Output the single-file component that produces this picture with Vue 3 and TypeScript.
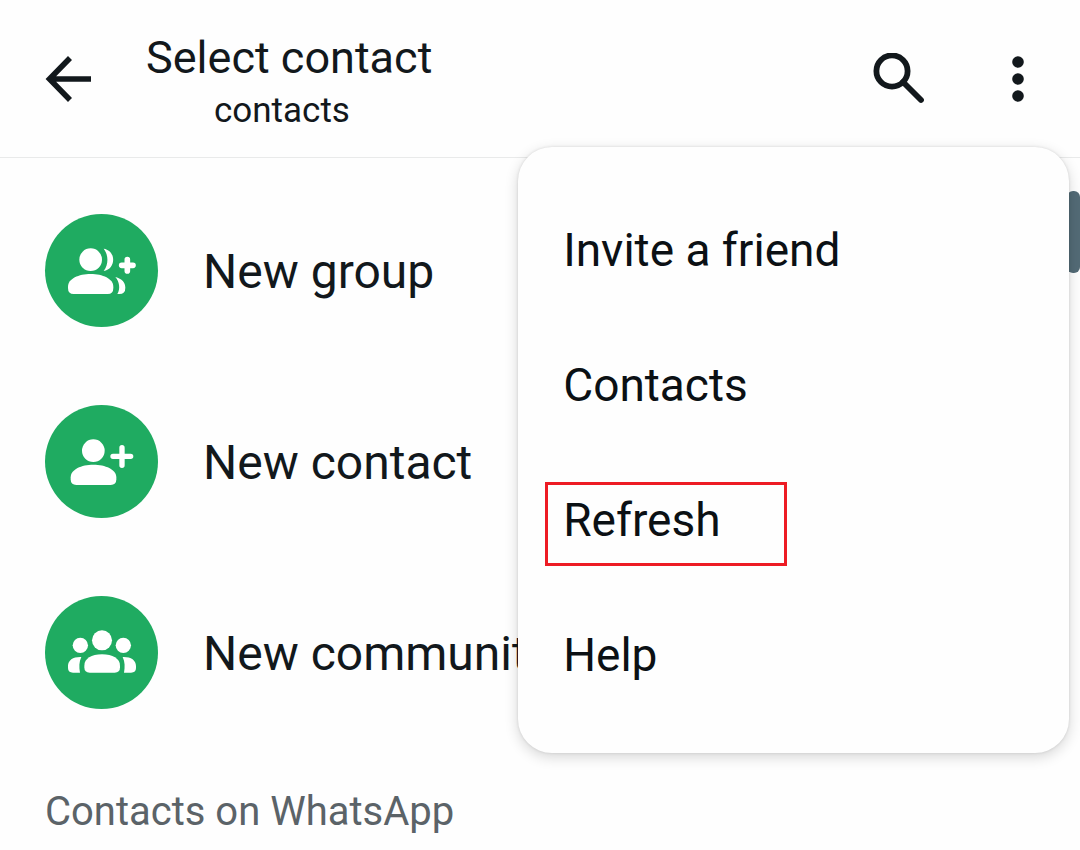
<script setup lang="ts">
import { ref } from 'vue'

type IconName = 'group' | 'contact' | 'community'

interface Action {
  icon: IconName
  label: string
  viewBox: string
}

interface MenuItem {
  label: string
  marked?: boolean
}

const actions: Action[] = [
  { icon: 'group', label: 'New group', viewBox: '45 42 339 339' },
  { icon: 'contact', label: 'New contact', viewBox: '45 45 339 339' },
  { icon: 'community', label: 'New community', viewBox: '45 48 339 339' },
]

const menuItems: MenuItem[] = [
  { label: 'Invite a friend' },
  { label: 'Contacts' },
  { label: 'Refresh', marked: true },
  { label: 'Help' },
]

const menuOpen = ref(true)
</script>

<template>
  <div class="screen">
    <header class="bar">
      <button class="icon-button" type="button" aria-label="Back">
        <svg width="48" height="48" viewBox="0 0 48 48" fill="none" stroke="currentColor" stroke-width="5.6">
          <path d="M47 24H7M26 3L5.500 24l20.500 21" />
        </svg>
      </button>
      <div class="titles">
        <h1>Select contact</h1>
        <p>contacts</p>
      </div>
      <button class="icon-button" type="button" aria-label="Search">
        <svg width="52" height="52" viewBox="0 0 52 52" fill="none" stroke="currentColor">
          <circle cx="20" cy="18" r="15.6" stroke-width="5.8" />
          <path d="M31 29l18 18" stroke-width="5.8" stroke-linecap="round" />
        </svg>
      </button>
      <button
        class="icon-button more"
        type="button"
        aria-label="More options"
        :aria-expanded="menuOpen"
        @click="menuOpen = !menuOpen"
      >
        <svg width="12" height="48" viewBox="0 0 12 48" fill="currentColor">
          <circle cx="6" cy="7" r="5.8" />
          <circle cx="6" cy="24" r="5.8" />
          <circle cx="6" cy="41" r="5.8" />
        </svg>
      </button>
    </header>

    <main>
      <ul class="actions">
        <li v-for="action in actions" :key="action.icon">
          <button class="action" type="button">
            <svg class="badge" :viewBox="action.viewBox" fill="#fff" aria-hidden="true">
              <g v-if="action.icon === 'group'">
                <circle cx="182" cy="179" r="34" />
                <path d="M221 146C259 151 259 208 221 213C236 194 236 165 221 146Z" />
                <path d="M114 260C114 236 146 222 182 222S250 236 250 260V264Q250 282 233 282H131Q114 282 114 264Z" />
                <path d="M256 231C276 236 286 248 286 263Q286 282 268 282H262C272 266 268 245 256 231Z" />
                <path d="M292 179V213M275 196H309" fill="none" stroke="#fff" stroke-width="17" stroke-linecap="round" />
              </g>
              <g v-else-if="action.icon === 'contact'">
                <circle cx="190" cy="182" r="34" />
                <path d="M122 262C122 238 154 224 190 224S259 238 259 262V268Q259 285 242 285H139Q122 285 122 268Z" />
                <path d="M276 173V226M249 199H302" fill="none" stroke="#fff" stroke-width="16" stroke-linecap="round" />
              </g>
              <g v-else>
                <circle cx="216" cy="181" r="30" />
                <circle cx="151" cy="196" r="23" />
                <circle cx="280" cy="196" r="23" />
                <path d="M163 257C163 236 184 223 216 223S270 236 270 257V262Q270 278 254 278H179Q163 278 163 262Z" />
                <path d="M154 231C130 230 114 240 114 258V264Q114 278 129 278H150C147 262 147 245 154 231Z" />
                <path d="M278 231C302 230 318 240 318 258V264Q318 278 303 278H282C285 262 285 245 278 231Z" />
              </g>
            </svg>
            <span>{{ action.label }}</span>
          </button>
        </li>
      </ul>
      <h2>Contacts on WhatsApp</h2>
    </main>

    <div class="scroll-thumb"></div>

    <ul v-if="menuOpen" class="menu" role="menu">
      <li v-for="item in menuItems" :key="item.label" role="none">
        <button type="button" role="menuitem" :class="{ marked: item.marked }">{{ item.label }}</button>
      </li>
    </ul>
  </div>
</template>

<style>
body {
  margin: 0;
  background: #fefefe;
}
</style>

<style scoped>
.screen {
  position: relative;
  min-height: 100vh;
  box-sizing: border-box;
  overflow: hidden;
  background: #fefefe;
  color: #12181c;
  font-family: Roboto, "Noto Sans", sans-serif;
}

button {
  margin: 0;
  padding: 0;
  border: 0;
  background: none;
  color: inherit;
  font: inherit;
  text-align: left;
  cursor: pointer;
}

h1,
h2,
p,
ul {
  margin: 0;
  padding: 0;
  font-weight: 400;
  list-style: none;
}

svg {
  display: block;
  flex: none;
}

.bar {
  display: flex;
  align-items: center;
  height: 157px;
  padding: 0 56px 0 44px;
  border-bottom: 1px solid #e9eaea;
}

.titles {
  flex: 1;
  margin-left: 54px;
  padding-top: 4px;
}

h1 {
  font-size: 45px;
  line-height: 60px;
}

p {
  padding-left: 68px;
  font-size: 35px;
  line-height: 46px;
}

.more {
  margin-left: 88px;
}

.actions {
  padding-top: 17px;
}

.action {
  display: flex;
  align-items: center;
  gap: 45px;
  width: 100%;
  height: 191px;
  padding: 0 45px;
  font-size: 48px;
  white-space: nowrap;
}

.action span {
  padding-top: 2px;
}

.badge {
  width: 113px;
  height: 113px;
  border-radius: 50%;
  background: #1fab61;
}

h2 {
  padding: 40px 45px 12px;
  color: #5b6368;
  font-size: 40px;
  line-height: 48px;
}

.scroll-thumb {
  position: absolute;
  top: 191px;
  right: 0;
  width: 13px;
  height: 82px;
  border-radius: 6px;
  background: #536b76;
}

.menu {
  position: absolute;
  top: 147px;
  right: 11px;
  width: 51%;
  box-sizing: border-box;
  padding: 35px 0 31px;
  border-radius: 34px;
  background: #fefefe;
  box-shadow: 0 4px 14px rgba(0, 0, 0, 0.16), 0 0 3px rgba(0, 0, 0, 0.12);
  color: #0b1014;
}

.menu button {
  display: block;
  position: relative;
  width: 100%;
  height: 135px;
  padding: 0 45px;
  font-size: 46px;
}

.marked::after {
  content: "";
  position: absolute;
  top: 30px;
  left: 27px;
  width: 242px;
  height: 84px;
  box-sizing: border-box;
  border: 3px solid #ed1c24;
}
</style>
